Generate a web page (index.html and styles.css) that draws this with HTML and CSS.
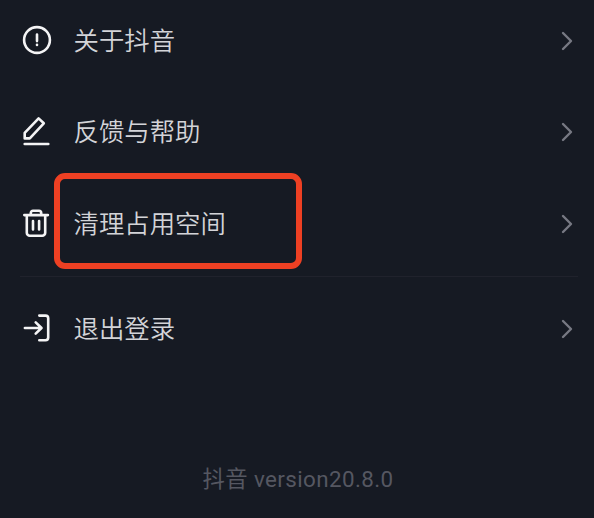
FILE: index.html
```html
<!DOCTYPE html>
<html lang="zh-CN">
<head>
    <meta charset="UTF-8">
    <title>设置</title>
    <link rel="stylesheet" href="styles.css">
</head>
<body>
    <div class="settings">
        <div class="group">
            <div class="row">
                <svg class="icon" viewBox="0 0 32 32">
                    <circle cx="16" cy="15" r="12.9"/>
                    <path d="M16 9.5v6.6M16 19.7v.3"/>
                </svg>
                <span class="label">关于抖音</span>
                <svg class="arrow" viewBox="0 0 12 20"><path d="M2 2l8 8-8 8"/></svg>
            </div>
            <div class="row">
                <svg class="icon" viewBox="0 0 32 32">
                    <path d="M3.7 22.4v-5.6L17.6 2.4l5.2 4.9L8.8 22.4zM3.7 28h23.6"/>
                </svg>
                <span class="label">反馈与帮助</span>
                <svg class="arrow" viewBox="0 0 12 20"><path d="M2 2l8 8-8 8"/></svg>
            </div>
            <div class="row marked">
                <svg class="icon" viewBox="0 0 32 32">
                    <path d="M3.3 7.1h23.6M9.8 7V5a2.2 2.2 0 0 1 2.2-2.2h6a2.2 2.2 0 0 1 2.2 2.2V7M5.8 7.5v17.2a3 3 0 0 0 3 3h12.4a3 3 0 0 0 3-3V7.5M12 13.1v8.4M18.1 13.1v8.4"/>
                </svg>
                <span class="label">清理占用空间</span>
                <svg class="arrow" viewBox="0 0 12 20"><path d="M2 2l8 8-8 8"/></svg>
            </div>
        </div>
        <div class="line"></div>
        <div class="row">
            <svg class="icon" viewBox="0 0 32 32">
                <path d="M3.9 15h16M14.7 9.4l5.8 5.6-5.8 5.6M18.3 2.6h6.2a2.7 2.7 0 0 1 2.7 2.7v19.2a2.7 2.7 0 0 1-2.7 2.7h-6.2"/>
            </svg>
            <span class="label">退出登录</span>
            <svg class="arrow" viewBox="0 0 12 20"><path d="M2 2l8 8-8 8"/></svg>
        </div>
        <p class="version">抖音 version20.8.0</p>
    </div>
</body>
</html>
```

FILE: styles.css
```css
*{
    box-sizing: border-box;
}
body{
    margin: 0;
    background: #161a23;
    font-family: Roboto, "Noto Sans CJK SC", sans-serif;
}
.settings{
    height: 518px;
    overflow: hidden;
}
.group{
    display: flex;
    flex-direction: column;
    gap: 10.5px;
}
.row{
    display: flex;
    align-items: center;
    position: relative;
    height: 81px;
    padding: 0 21px;
}
.icon{
    width: 32px;
    height: 32px;
    margin-right: 20.5px;
    fill: none;
    stroke: #f4f4f5;
    stroke-width: 2.6;
    stroke-linecap: round;
    stroke-linejoin: round;
}
.label{
    flex: 1;
    color: #d3d4d8;
    font-size: 25.4px;
    font-weight: 350;
    line-height: 36px;
}
.arrow{
    width: 12px;
    height: 20px;
    fill: none;
    stroke: #777983;
    stroke-width: 2.4;
    stroke-linecap: round;
    stroke-linejoin: round;
}
/* red frame around the cleanup entry */
.marked::after{
    content: "";
    box-sizing: border-box;
    position: absolute;
    left: 54px;
    top: -10px;
    width: 248px;
    height: 96px;
    border: 6px solid #ee4023;
    border-radius: 11px;
}
.line{
    height: 1px;
    margin: 12px 16px 11.5px 20px;
    background: #20222c;
}
.version{
    margin: 91px 0 0;
    padding-left: 2px;
    color: #555761;
    font-size: 22.4px;
    font-weight: 400;
    letter-spacing: 0.4px;
    line-height: 36px;
    text-align: center;
}
```
